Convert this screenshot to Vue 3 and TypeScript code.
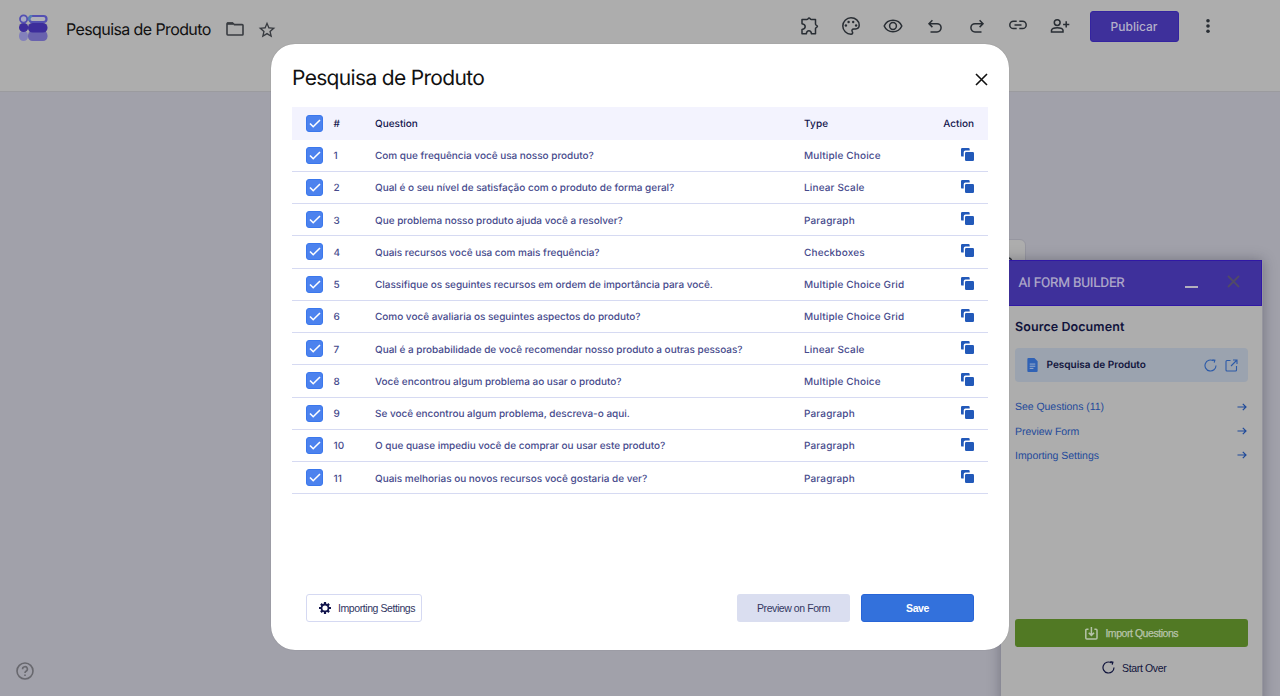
<script setup lang="ts">
interface Question {
  text: string
  type: string
}

const questions: Question[] = [
  { text: 'Com que frequência você usa nosso produto?', type: 'Multiple Choice' },
  { text: 'Qual é o seu nível de satisfação com o produto de forma geral?', type: 'Linear Scale' },
  { text: 'Que problema nosso produto ajuda você a resolver?', type: 'Paragraph' },
  { text: 'Quais recursos você usa com mais frequência?', type: 'Checkboxes' },
  { text: 'Classifique os seguintes recursos em ordem de importância para você.', type: 'Multiple Choice Grid' },
  { text: 'Como você avaliaria os seguintes aspectos do produto?', type: 'Multiple Choice Grid' },
  { text: 'Qual é a probabilidade de você recomendar nosso produto a outras pessoas?', type: 'Linear Scale' },
  { text: 'Você encontrou algum problema ao usar o produto?', type: 'Multiple Choice' },
  { text: 'Se você encontrou algum problema, descreva-o aqui.', type: 'Paragraph' },
  { text: 'O que quase impediu você de comprar ou usar este produto?', type: 'Paragraph' },
  { text: 'Quais melhorias ou novos recursos você gostaria de ver?', type: 'Paragraph' },
]

const links: string[] = ['See Questions (11)', 'Preview Form', 'Importing Settings']
</script>

<template>
  <div class="page">
    <header class="topbar">
      <svg class="logo" width="29" height="28" viewBox="0 0 29 28">
        <rect x="0" y="17" width="9" height="10" rx="4.5" fill="#8381bb" />
        <rect x="9" y="17" width="19.500" height="10" rx="4.500" fill="#6962ae" />
        <circle cx="4.600" cy="13.500" r="4.600" fill="#3d2d9b" />
        <rect x="9" y="9" width="19.500" height="9.500" rx="4.600" fill="#3d2d9b" />
        <circle cx="4.600" cy="5" r="3.600" fill="#a9aac3" stroke="#5450b2" stroke-width="1.800" />
        <rect x="10.200" y="2" width="17.300" height="6" rx="3" fill="#b0b1b8" stroke="#5450b2" stroke-width="2.200" />
        <path d="M10.200 6.500V5a3 3 0 0 1 3-3" fill="none" stroke="#4e7fb2" stroke-width="2.200" />
      </svg>
      <div class="form-title">Pesquisa de Produto</div>
      <svg class="folder" width="18" height="16" viewBox="0 0 18 16" fill="none" stroke="#383b40" stroke-width="1.600">
        <path d="M1 13V2.800Q1 2 1.800 2H6.600L8.400 3.600H16.200Q17 3.600 17 4.400V13.200Q17 14 16.200 14H1.800Q1 14 1 13Z" />
        <path d="M1 2.600H7" stroke-width="2.400" />
      </svg>
      <svg class="star" width="20" height="20" viewBox="0 0 24 24" fill="#383b40">
        <path d="M22 9.240l-7.190-.620L12 2 9.190 8.630 2 9.240l5.460 4.730L5.820 21 12 17.270 18.180 21l-1.630-7.030L22 9.240zM12 15.400l-3.760 2.270 1-4.280-3.320-2.880 4.380-.380L12 6.100l1.710 4.040 4.380.380-3.320 2.880 1 4.280L12 15.400z" />
      </svg>
      <nav class="tools">
        <svg viewBox="0 0 20 20" fill="none" stroke="#292e34" stroke-width="1.500" stroke-linejoin="round">
          <path d="M2 3.500H6.800Q7.600 3.500 8 2.800Q9 1.200 10.200 2.800Q10.600 3.500 11.300 3.500H15.500V8Q15.500 8.700 16.200 9.100Q18.700 10.300 16.200 11.600Q15.500 12 15.500 12.600V17.800H11.500Q11.100 14.700 8.900 14.700Q6.700 14.700 6.300 17.800H2V13.500Q5.200 13 5.200 10.700Q5.200 8.200 2 7.800Z" />
        </svg>
        <svg viewBox="0 0 20 20" fill="none" stroke="#292e34" stroke-width="1.500">
          <path d="M10 1.800A8.200 8.200 0 1 0 10 18.200C11.600 18.200 12.100 16.800 11.300 15.700C10.400 14.300 11.200 13 12.700 13H14.500C16.800 13 18.200 11.500 18.200 9.100C18.200 5 14.500 1.800 10 1.800Z" />
          <g fill="#292e34" stroke="none"><circle cx="4.900" cy="9.500" r="1.200" /><circle cx="7.600" cy="6" r="1.200" /><circle cx="12.200" cy="6" r="1.200" /><circle cx="15.100" cy="9.500" r="1.200" /></g>
        </svg>
        <svg viewBox="0 0 20 20" fill="none" stroke="#292e34" stroke-width="1.500">
          <path d="M1.200 10C4.500 2.400 15.500 2.400 18.800 10C15.500 17.600 4.500 17.600 1.200 10Z" /><circle cx="10" cy="10" r="3.400" />
        </svg>
        <svg viewBox="0 0 20 20" fill="none" stroke="#292e34" stroke-width="1.500">
          <path d="M7.400 4.300L4 7.700L7.400 11.100M4.300 7.700H12A4.100 4.100 0 0 1 12 15.900H5.500" />
        </svg>
        <svg viewBox="0 0 20 20" fill="none" stroke="#292e34" stroke-width="1.500">
          <path d="M12.600 4.300L16 7.700L12.600 11.100M15.700 7.700H8A4.100 4.100 0 0 0 8 15.900H14.500" />
        </svg>
        <svg class="raised" viewBox="0 0 20 20" fill="none" stroke="#292e34" stroke-width="1.500">
          <path d="M8.700 6.200H5.500A3.700 3.700 0 0 0 5.500 13.600H8.700M11.300 6.200H14.500A3.700 3.700 0 0 1 14.500 13.600H11.300M6.500 9.900H13.500" />
        </svg>
        <svg viewBox="0 0 20 20" fill="none" stroke="#292e34" stroke-width="1.500">
          <circle cx="7.200" cy="6.600" r="2.900" /><path d="M1.500 16V14.200C2 12.400 5 11.800 7.200 11.800S12.600 12.400 13 14.200V16ZM16.200 5.300V11.500M13.100 8.400H19.300" />
        </svg>
      </nav>
      <button class="publish">Publicar</button>
      <svg class="more" width="6" height="16" viewBox="0 0 6 16" fill="#292e34">
        <circle cx="3" cy="2.800" r="1.800" /><circle cx="3" cy="8" r="1.800" /><circle cx="3" cy="13.200" r="1.800" />
      </svg>
    </header>

    <div class="toolbox">
      <svg width="6" height="8" viewBox="0 0 6 8" fill="none" stroke="#292e34" stroke-width="1.500"><path d="M0 1Q4 1 4 6" /></svg>
    </div>
    <svg class="help" width="18" height="18" viewBox="0 0 18 18" fill="none" stroke="#68686e" stroke-width="1.600">
      <circle cx="9" cy="9" r="8" /><path d="M6.600 7.200A2.400 2.400 0 1 1 10 9.200Q9 9.700 9 11M9 12.400V14" />
    </svg>

    <aside class="panel">
      <div class="panel-head">
        <span class="panel-title">AI FORM BUILDER</span>
        <span class="minimize"></span>
        <svg width="13" height="13" viewBox="0 0 13 13" stroke="#514a68" stroke-width="1.800"><path d="M1 1L12 12M12 1L1 12" /></svg>
      </div>
      <div class="panel-body">
        <h2>Source Document</h2>
        <div class="source">
          <svg class="doc" width="11" height="14" viewBox="0 0 11 15">
            <path d="M1 0H7.500L11 3.500V14Q11 15 10 15H1Q0 15 0 14V1Q0 0 1 0Z" fill="#3062b5" />
            <path d="M2.500 6.500H8.500M2.500 8.800H8.500M2.500 11.100H6.500" stroke="#a5b4cf" />
          </svg>
          <span class="source-name">Pesquisa de Produto</span>
          <svg class="reload" width="13" height="13" viewBox="0 0 13 13" fill="none" stroke="#2c5aa8" stroke-width="1.100">
            <path d="M12 6.500A5.500 5.500 0 1 1 9.500 1.900M8.400 .7L10.900 1.200L10.200 3.600" />
          </svg>
          <svg width="13" height="13" viewBox="0 0 13 13" fill="none" stroke="#2c5aa8" stroke-width="1.100">
            <path d="M5.500 1.500H2Q1 1.500 1 2.500V11Q1 12 2 12H10.500Q11.500 12 11.500 11V7M8 1H12V5M12 1L6 7" />
          </svg>
        </div>
        <div class="links">
          <a v-for="label in links" :key="label">
            <span>{{ label }}</span>
            <svg width="10" height="8" viewBox="0 0 10 8" fill="none" stroke="#1f4a9b" stroke-width="1.200"><path d="M.5 4H9M5.800 .8L9 4L5.800 7.200" /></svg>
          </a>
        </div>
        <button class="import">
          <svg width="13" height="13" viewBox="0 0 13 13" fill="none" stroke="#b5c3a9" stroke-width="1.500">
            <path d="M3.500 2.200H1.800Q.8 2.200 .8 3.200V11Q.8 12 1.800 12H11Q12 12 12 11V3.200Q12 2.200 11 2.200H9.400M6.400 0V8.200M3.700 5.700L6.400 8.400L9.100 5.700" />
          </svg>
          <span>Import Questions</span>
        </button>
        <button class="restart">
          <svg width="13" height="13" viewBox="0 0 13 13" fill="none" stroke="#11153d" stroke-width="1.200">
            <path d="M12 6.500A5.500 5.500 0 1 1 9.500 1.900M8.400 .7L10.900 1.200L10.200 3.600" />
          </svg>
          <span>Start Over</span>
        </button>
      </div>
    </aside>

    <section class="modal">
      <div class="modal-head">
        <h1>Pesquisa de Produto</h1>
        <svg width="13" height="13" viewBox="0 0 13 13" stroke="#111" stroke-width="1.600"><path d="M1 1L12 12M12 1L1 12" /></svg>
      </div>
      <div class="table">
        <div class="row head">
          <span class="check"><svg width="12" height="9" viewBox="0 0 12 9"><path d="M1 4.500L4.200 7.700L11 1" /></svg></span>
          <span class="num">#</span>
          <span class="question">Question</span>
          <span class="type">Type</span>
          <span class="action">Action</span>
        </div>
        <div v-for="(q, i) in questions" :key="q.text" class="row">
          <span class="check"><svg width="12" height="9" viewBox="0 0 12 9"><path d="M1 4.500L4.200 7.700L11 1" /></svg></span>
          <span class="num">{{ i + 1 }}</span>
          <span class="question">{{ q.text }}</span>
          <span class="type">{{ q.type }}</span>
          <span class="action">
            <svg width="13" height="13" viewBox="0 0 13 13" fill="#2259b9">
              <path d="M1.200 0H7.500Q8.700 0 8.700 1.200V2.600H4.400Q2.700 2.600 2.700 4.300V8.600H1.200Q0 8.600 0 7.400V1.200Q0 0 1.200 0Z" />
              <rect x="4" y="4" width="9" height="9" rx="1.200" />
            </svg>
          </span>
        </div>
      </div>
      <div class="modal-foot">
        <button class="settings">
          <svg width="12" height="12" viewBox="0 0 12 12">
            <g stroke="#11144c" stroke-width="2.200"><path d="M6 0V12M0 6H12M1.900 1.900L10.100 10.100M10.100 1.900L1.900 10.100" /></g>
            <circle cx="6" cy="6" r="4.400" fill="#11144c" /><circle cx="6" cy="6" r="2.600" fill="#fff" />
          </svg>
          <span>Importing Settings</span>
        </button>
        <button class="preview">Preview on Form</button>
        <button class="save">Save</button>
      </div>
    </section>
  </div>
</template>

<style>
html, body { margin: 0; overflow: hidden; }
</style>

<style scoped>
* { box-sizing: border-box; }
button { margin: 0; padding: 0; border: 0; font: inherit; }
h1, h2 { margin: 0; }
svg { display: block; flex: none; }
.page {
  position: relative;
  height: 696px;
  overflow: hidden;
  background: #a1a1aa;
  font-family: "Liberation Sans", Arial, sans-serif;
  text-rendering: geometricPrecision;
}
.topbar {
  display: flex;
  height: 92px;
  padding-left: 19px;
  background: #adadad;
  border-bottom: 1px solid #9b9b9f;
}
.logo { margin-top: 14px; }
.form-title {
  width: 160px;
  margin: 17px 0 0 18px;
  font: 400 16px/24px Inter, sans-serif;
  letter-spacing: -0.600px;
  color: #111;
  white-space: nowrap;
}
.folder { margin-top: 21px; }
.star { margin: 19.500px 0 0 12.500px; }
.tools { display: flex; gap: 21.750px; margin: 16px 0 0 523px; }
.tools svg { width: 20px; height: 20px; }
.tools .raised { margin-top: -1.500px; }
.publish {
  width: 89px;
  height: 31px;
  margin: 11px 0 0 19.500px;
  border: 1px solid #3424a0;
  border-radius: 3px;
  background: #3e309b;
  color: #b4b0c9;
  font: 500 12px/27px Inter, sans-serif;
}
.more { margin: 18px 0 0 26.500px; }
.toolbox {
  position: absolute;
  left: 980px;
  top: 239px;
  width: 46px;
  height: 60px;
  padding: 17px 0 0 27px;
  border: 1px solid #9696a0;
  border-radius: 6px;
  background: #adadad;
}
.help { position: absolute; left: 16px; top: 662px; }
.panel {
  position: absolute;
  left: 1001px;
  top: 260px;
  width: 262px;
  height: 445px;
  background: #adadad;
  border-right: 1px solid #96969e;
  box-shadow: 0 0 12px rgba(30, 30, 50, .35);
}
.panel-head {
  display: flex;
  align-items: center;
  height: 45.500px;
  padding: 0 22px 0 17.500px;
  border: 1px solid #3018a5;
  border-left: 0;
  background: #3e309b;
}
.panel-title {
  flex: 1;
  font: 400 13.500px/20px Roboto, sans-serif;
  letter-spacing: -0.200px;
  color: #b0abca;
  -webkit-text-stroke: 0.200px #b0abca;
  white-space: nowrap;
}
.minimize { width: 13px; height: 2px; margin: 9px 28px 0 0; background: #b3b0bd; }
.panel-head svg { margin: -3px -1px 0 1px; }
.panel-body { padding: 12.500px 14px 0 14px; }
.panel-body h2 {
  font: 600 12.500px/20px Inter, sans-serif;
  letter-spacing: 0.080px;
  color: #11143c;
}
.source {
  display: flex;
  align-items: center;
  height: 34px;
  margin-top: 10px;
  padding: 0 10px 0 12px;
  border-radius: 4px;
  background: #9ba3af;
}
.source-name {
  flex: 1;
  margin: 0 0 0 8.500px;
  font: 600 10px/16px Inter, sans-serif;
  color: #11143c;
}
.reload { margin-right: 8px; }
.links { margin-top: 12.500px; }
.links a {
  display: flex;
  align-items: center;
  justify-content: space-between;
  height: 24.400px;
  padding-right: 1px;
  font-size: 10.500px;
  letter-spacing: -0.040px;
  color: #1f4a9b;
}
.links span { padding-top: 1px; }
.import, .restart {
  display: flex;
  align-items: center;
  justify-content: center;
  width: 100%;
  font-size: 10.500px;
  letter-spacing: -0.450px;
}
.import {
  gap: 7.500px;
  height: 28px;
  margin-top: 151.500px;
  border-radius: 3px;
  background: #517924;
  color: #b7c4aa;
  -webkit-text-stroke: 0.250px #b7c4aa;
}
.restart {
  gap: 7.500px;
  height: 20px;
  margin-top: 10.500px;
  padding-left: 5px;
  background: transparent;
  color: #11143c;
  letter-spacing: -0.350px;
}
.modal {
  position: absolute;
  left: 271px;
  top: 44px;
  width: 738px;
  height: 606px;
  padding: 0 21px;
  border-radius: 24px;
  background: #fff;
  box-shadow: 0 0 1px rgba(0, 0, 0, .3);
}
.modal-head {
  display: flex;
  align-items: center;
  justify-content: space-between;
  height: 63px;
  padding: 7px 0 0;
}
.modal-head h1 {
  font: 400 21px/30px Inter, sans-serif;
  letter-spacing: -0.670px;
  color: #111;
}
.row {
  display: grid;
  grid-template-columns: 41.500px 41.500px 429px 1fr auto;
  align-items: center;
  height: 32.250px;
  padding-right: 14px;
  border-bottom: 1.500px solid #d6daf2;
  font: 500 10px/16px Inter, sans-serif;
  letter-spacing: -0.020px;
  color: #464a8c;
  white-space: nowrap;
}
.modal-head svg { margin: 0 .5px 0 0; }
.row.head { height: 32.500px; border-bottom: 0; background: #f3f3fe; color: #11144c; }
.num, .question, .type, .head .action { padding-top: 2px; }
.type { letter-spacing: 0.150px; }
.check {
  display: flex;
  align-items: center;
  justify-content: center;
  width: 17px;
  height: 17px;
  margin-left: 14px;
  border: 1px solid #3b78ed;
  border-radius: 3px;
  background: #4c82ee;
}
.check path { fill: none; stroke: #fff; stroke-width: 1.600; }
.row .action svg { margin-top: -2px; }
.modal-foot { display: flex; margin-top: 100px; padding: 0 14px; }
.modal-foot button { height: 28px; border-radius: 3px; font-size: 10.500px; letter-spacing: -0.420px; }
.settings {
  display: flex;
  align-items: center;
  gap: 7.500px;
  width: 116px;
  padding-left: 11.500px;
  border: 1px solid #d5d9f2;
  background: #fff;
  color: #30345f;
  white-space: nowrap;
}
.modal-foot .preview { width: 113px; margin-left: auto; background: #dadef0; color: #343862; }
.modal-foot .save {
  width: 113px;
  margin-left: 11px;
  border: 1px solid #2865d7;
  background: #3371dc;
  color: #fff;
  font-weight: 700;
}
</style>
